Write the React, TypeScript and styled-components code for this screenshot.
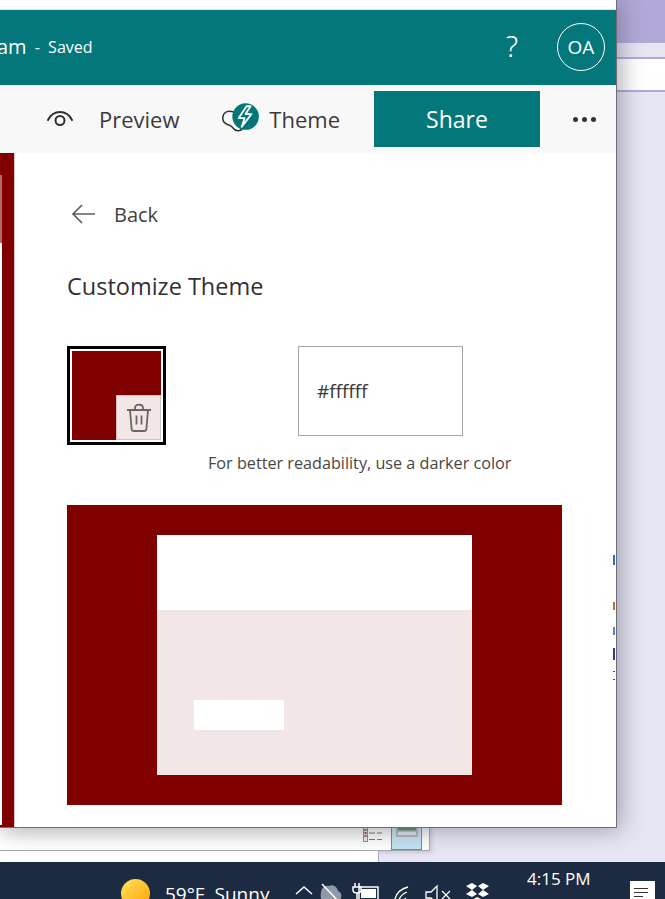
import React from "react";
import styled, { createGlobalStyle } from "styled-components";

const Global = createGlobalStyle`
  html, body { margin: 0; padding: 0; }
  body { width: 665px; height: 899px; overflow: hidden; font-family: "Open Sans", "Liberation Sans", sans-serif; }
`;

const Page = styled.div`
  position: relative;
  width: 665px;
  height: 899px;
  overflow: hidden;
  background: #e6e6f4;
  display: flex;
  flex-direction: column;
`;

const Desktop = styled.div`
  position: relative;
  height: 862px;
  display: flex;
  flex-direction: column;
  align-items: flex-end;
`;

const Stripe = styled.div<{ $h: number; $c: string }>`
  width: 48px;
  height: ${(p) => p.$h}px;
  background: ${(p) => p.$c};
  flex: none;
`;

const BehindWindow = styled.div`
  position: absolute;
  left: 0;
  top: 800px;
  width: 430px;
  height: 51px;
  box-sizing: border-box;
  background: linear-gradient(#e9e9e9, #ffffff 85%);
  border-right: 1px solid #a9a9a9;
  border-bottom: 1px solid #a9a9a9;
  box-shadow: 2px 2px 4px rgba(90, 90, 120, 0.2);
`;

const BehindLower = styled.div`
  position: absolute;
  left: 0;
  top: 851px;
  width: 378px;
  height: 11px;
  background: #fff;
  border-right: 1px solid #b3a9d9;
`;

const ViewIcons = styled.svg`
  position: absolute;
  left: 362px;
  top: 24px;
`;

const ThumbTile = styled.div`
  position: absolute;
  left: 391px;
  top: 0;
  width: 31px;
  height: 50px;
  box-sizing: border-box;
  background: #c4e4f3;
  border: 1px solid #2aa3dc;
  display: flex;
  align-items: flex-end;
  justify-content: center;
  padding-bottom: 12px;
`;

const Thumb = styled.div`
  width: 22px;
  height: 20px;
  box-sizing: border-box;
  border: 2px solid #b5b5b5;
  background: linear-gradient(#3f7fc6 0 30%, #a9c6dc 45%, #4e7d63 62%, #dfe8ee 85%);
`;

const Window = styled.div`
  position: absolute;
  left: 0;
  top: 0;
  width: 617px;
  height: 828px;
  box-sizing: border-box;
  background: #fff;
  border-right: 1px solid #6f6f73;
  border-bottom: 1px solid #6f6f73;
  box-shadow: 4px 2px 22px rgba(70, 70, 90, 0.45);
  display: flex;
  flex-direction: column;
`;

const TopGap = styled.div`
  height: 10px;
  flex: none;
  box-sizing: border-box;
  border-bottom: 1px solid #e4e6e8;
`;

const Header = styled.header`
  height: 75px;
  flex: none;
  background: #04777b;
  color: #fff;
  display: flex;
  align-items: center;
  overflow: hidden;
`;

const Title = styled.span`
  font-size: 20px;
  margin-left: -3px;
  margin-top: -2px;
`;

const Saved = styled.span`
  font-size: 16px;
  margin-left: 8px;
  margin-top: -1px;
`;

const Help = styled.span`
  margin-left: auto;
  font-size: 29px;
  font-weight: 300;
  font-family: "Noto Sans", sans-serif;
  margin-top: -4px;
`;

const Avatar = styled.div`
  width: 48px;
  height: 48px;
  box-sizing: border-box;
  border: 1px solid #fff;
  border-radius: 50%;
  margin: -2px 11px 0 39px;
  display: flex;
  align-items: center;
  justify-content: center;
  font-size: 19px;
`;

const Toolbar = styled.div`
  height: 68px;
  flex: none;
  background: #f8f8f8;
  display: flex;
  align-items: center;
  color: #3b3a39;
  font-size: 22px;
`;

const ToolItem = styled.div<{ $left: number; $gap: number; $width: number }>`
  margin-left: ${(p) => p.$left}px;
  width: ${(p) => p.$width}px;
  display: flex;
  align-items: center;
  gap: ${(p) => p.$gap}px;
  flex: none;
`;

const ShareButton = styled.button`
  width: 166px;
  height: 56px;
  margin-left: 34px;
  flex: none;
  border: 0;
  background: #04777b;
  color: #fff;
  font: 600 23px "Open Sans", sans-serif;
  font-weight: 500;
  padding: 0;
`;

const More = styled.div`
  margin-left: 33px;
  display: flex;
  gap: 4px;
`;

const Dot = styled.i`
  width: 5px;
  height: 5px;
  border-radius: 50%;
  background: #333;
`;

const Body = styled.div`
  flex: 1;
  display: flex;
  min-height: 0;
`;

const Rail = styled.div`
  width: 14px;
  flex: none;
  background: #800000;
  border-right: 1px solid #d8c8c8;
  position: relative;
  display: flex;
  flex-direction: column;
`;

const RailGap = styled.div<{ $h?: number; $c: string }>`
  width: 2px;
  flex: ${(p) => (p.$h ? "none" : "1")};
  height: ${(p) => (p.$h ? `${p.$h}px` : "auto")};
  background: ${(p) => p.$c};
`;

const Panel = styled.main`
  flex: 1;
  position: relative;
  padding: 0 0 0 52px;
  display: flex;
  flex-direction: column;
  color: #323130;
`;

const BackRow = styled.div`
  height: 24px;
  margin: 49px 0 0 4px;
  display: flex;
  align-items: center;
  gap: 19px;
  font-size: 20px;
  color: #424242;
`;

const Heading = styled.h2`
  margin: 43px 0 0;
  height: 34px;
  font-size: 23.5px;
  line-height: 34px;
  font-weight: 400;
  color: #323130;
`;

const ThemeRow = styled.div`
  margin-top: 43px;
  height: 99px;
  display: flex;
  gap: 132px;
`;

const Swatch = styled.div`
  width: 99px;
  height: 99px;
  box-sizing: border-box;
  border: 3px solid #000;
  outline: 2px solid #fff;
  outline-offset: -5px;
  background: #800000;
  position: relative;
`;

const TrashBox = styled.div`
  position: absolute;
  right: 2px;
  bottom: 2px;
  width: 45px;
  height: 45px;
  box-sizing: border-box;
  background: #f2e6e6;
  border: 1px solid #cfc4c4;
  display: flex;
  align-items: center;
  justify-content: center;
`;

const ColorField = styled.div`
  width: 165px;
  height: 90px;
  box-sizing: border-box;
  border: 1px solid #a6a6a6;
  padding-left: 18px;
  display: flex;
  align-items: center;
  font-size: 19px;
  color: #3b3a39;
`;

const Hint = styled.p`
  margin: 7px 0 0 141px;
  height: 23px;
  font-size: 16.2px;
  line-height: 23px;
  color: #484644;
  white-space: nowrap;
`;

const Preview = styled.div`
  margin-top: 30px;
  width: 495px;
  height: 300px;
  box-sizing: border-box;
  background: #800000;
  padding: 30px 90px;
`;

const PreviewCard = styled.div`
  width: 315px;
  height: 240px;
  background: #fff;
  display: flex;
  flex-direction: column;
`;

const PreviewBanner = styled.div`
  height: 75px;
  flex: none;
`;

const PreviewBody = styled.div`
  flex: 1;
  background: #f2e6e6;
  padding: 90px 0 0 37px;
`;

const PreviewButton = styled.div`
  width: 90px;
  height: 30px;
  background: #fff;
`;

const Slivers = styled.svg`
  position: absolute;
  right: 0;
  top: 395px;
`;

const Taskbar = styled.footer`
  height: 37px;
  flex: none;
  background: #1c2b42;
  position: relative;
  overflow: hidden;
  color: #fff;
  display: flex;
  align-items: flex-start;
`;

const Sun = styled.div`
  width: 29px;
  height: 29px;
  border-radius: 50%;
  margin: 17px 0 0 121px;
  flex: none;
  background: linear-gradient(135deg, #ffe45e, #ffa000);
`;

const Weather = styled.span`
  margin: 19px 0 0 15px;
  font-size: 19px;
  line-height: 26px;
  white-space: pre;
  flex: none;
`;

const Tray = styled.svg`
  margin: 18px 0 0 26px;
  flex: none;
`;

const Clock = styled.span`
  position: absolute;
  left: 527px;
  top: 6px;
  font-size: 17px;
  line-height: 22px;
  white-space: nowrap;
`;

const Notify = styled.div`
  position: absolute;
  left: 630px;
  top: 19px;
  width: 25px;
  height: 20px;
  background: #fff;
  padding: 7px 4px;
  box-sizing: border-box;
  display: flex;
  flex-direction: column;
  gap: 3px;
`;

const NotifyLine = styled.i<{ $w: number }>`
  width: ${(p) => p.$w}px;
  height: 1px;
  background: #333;
  flex: none;
`;

export default function App() {
  return (
    <Page>
      <Global />
      <Desktop>
        <Stripe $h={43} $c="#b3a9d9" />
        <Stripe $h={14} $c="#e6e6f4" />
        <Stripe $h={2} $c="#b3a9d9" />
        <Stripe $h={31} $c="#ffffff" />
        <Stripe $h={2} $c="#b3a9d9" />
        <BehindWindow>
          <ViewIcons width="24" height="24" viewBox="0 0 24 24">
            <g fill="#eee" stroke="#8d8d8d">
              <rect x="1.5" y="0.5" width="4" height="5" />
              <rect x="1.5" y="6.5" width="4" height="5" />
              <rect x="1.5" y="12.5" width="4" height="5" />
            </g>
            <rect x="2.5" y="8" width="2" height="2" fill="#a33" />
            <g stroke="#777" strokeWidth="1.2">
              <path d="M7 2.5h6M15 2.5h5M7 9h6M15 9h5M7 15.5h6M15 15.5h5" />
            </g>
          </ViewIcons>
          <ThumbTile>
            <Thumb />
          </ThumbTile>
        </BehindWindow>
        <BehindLower />
        <Window>
          <TopGap />
          <Header>
            <Title>am</Title>
            <Saved>-&nbsp; Saved</Saved>
            <Help>?</Help>
            <Avatar>OA</Avatar>
          </Header>
          <Toolbar>
            <ToolItem $left={46} $gap={25} $width={140}>
              <svg width="28" height="20" viewBox="0 0 28 20" fill="none" stroke="#323130" strokeWidth="2">
                <path d="M2 11C5 5 9 3 14 3s9 2 12 8" strokeLinecap="round" />
                <circle cx="14" cy="11.5" r="4.5" />
              </svg>
              <span>Preview</span>
            </ToolItem>
            <ToolItem $left={35} $gap={6} $width={119}>
              <svg width="43" height="36" viewBox="0 0 43 36">
                <path d="M13 11C5 8 1 13 2 19c.6 4 5 5 8 6 2 1 3 5 7 5 3 0 5-2 5-5" fill="none" stroke="#323130" strokeWidth="1.6" />
                <circle cx="25" cy="15.5" r="13.5" fill="#04777b" />
                <path d="M26 5l-8 12h6l-3 9 10-13h-6l5-8z" fill="none" stroke="#fff" strokeWidth="1.8" strokeLinejoin="round" />
              </svg>
              <span>Theme</span>
            </ToolItem>
            <ShareButton>Share</ShareButton>
            <More>
              <Dot />
              <Dot />
              <Dot />
            </More>
          </Toolbar>
          <Body>
            <Rail>
              <RailGap $h={22} $c="#800000" />
              <RailGap $h={68} $c="#b26b6b" />
              <RailGap $c="#ffffff" />
              <RailGap $h={2} $c="#800000" />
            </Rail>
            <Panel>
              <BackRow>
                <svg width="24" height="20" viewBox="0 0 24 20" fill="none" stroke="#605e5c" strokeWidth="1.7">
                  <path d="M24 10H2M11 1l-9 9 9 9" />
                </svg>
                <span>Back</span>
              </BackRow>
              <Heading>Customize Theme</Heading>
              <ThemeRow>
                <Swatch>
                  <TrashBox>
                    <svg width="26" height="30" viewBox="0 0 26 30" fill="none" stroke="#6a6464" strokeWidth="1.8">
                      <path d="M1 7h24M4 7l1.6 19c.1 1.400 1 2 2.400 2h10c1.400 0 2.300-.6 2.400-2L22 7M9 7V5c0-2 1.600-3.400 4-3.400S17 3 17 5v2M10.500 12.500v9M15.500 12.500v9" />
                    </svg>
                  </TrashBox>
                </Swatch>
                <ColorField>#ffffff</ColorField>
              </ThemeRow>
              <Hint>For better readability, use a darker color</Hint>
              <Preview>
                <PreviewCard>
                  <PreviewBanner />
                  <PreviewBody>
                    <PreviewButton />
                  </PreviewBody>
                </PreviewCard>
              </Preview>
              <Slivers width="3" height="140" viewBox="0 0 3 140">
                <rect x="0" y="7" width="2" height="10" fill="#2a6fc9" />
                <rect x="0" y="54" width="2" height="8" fill="#c26a2e" />
                <rect x="0" y="79" width="2" height="8" fill="#4a86c8" />
                <rect x="0" y="100" width="2" height="12" fill="#2a3b90" />
                <rect x="0" y="123" width="2" height="1" fill="#44546a" />
                <rect x="0" y="131" width="2" height="1" fill="#44546a" />
              </Slivers>
            </Panel>
          </Body>
        </Window>
      </Desktop>
      <Taskbar>
        <Sun />
        <Weather>59°F  Sunny</Weather>
        <Tray width="210" height="24" viewBox="0 0 210 24" fill="none" stroke="#fff">
          <path d="M1 14l8-7 8 7" strokeWidth="1.5" />
          <path d="M26 13c0-5 4-8 8-7 3-2 8 0 9 5 3 1 4 4 3 7l-1 4H30c-4 0-5-6-4-9z" fill="#8f98a5" stroke="none" />
          <path d="M27 4l19 20" stroke="#fff" strokeWidth="1.5" />
          <path d="M60 3v4M64 3v4M58 7h8v3c0 2-2 3-4 3s-4-1-4-3zM62 13v8" strokeWidth="1.5" />
          <rect x="64" y="7" width="19" height="13" strokeWidth="1.5" />
          <rect x="66" y="9" width="15" height="9" fill="#fff" stroke="none" />
          <path d="M99 23c1-8 6-14 14-16M103 23c1-5 4-9 9-11M107 23c1-2 2-4 4-5" strokeWidth="1.3" />
          <path d="M131 12h5l6-6v17l-6-5h-5z" strokeWidth="1.3" />
          <path d="M147 11l8 8M155 11l-8 8" strokeWidth="1.2" />
          <g fill="#fff" stroke="none">
            <path d="M171 6l6-3 5 3-5 4zM183 6l5-3 6 3-6 4zM171 14l6-4 5 4-5 3zM183 14l5-4 6 4-6 3zM177 20l5-3 6 3-6 4z" />
          </g>
        </Tray>
        <Clock>4:15 PM</Clock>
        <Notify>
          <NotifyLine $w={14} />
          <NotifyLine $w={14} />
          <NotifyLine $w={9} />
        </Notify>
      </Taskbar>
    </Page>
  );
}
